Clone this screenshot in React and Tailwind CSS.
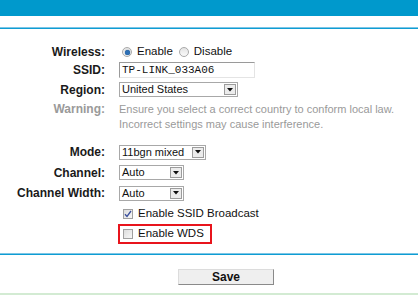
import React from "react";

const Label = ({ children, muted }) => (
  <div
    className={`w-[105px] text-right font-bold text-[12px] ${
      muted ? "text-[#9a9a9a]" : "text-[#1a1a1a]"
    }`}
  >
    {children}
  </div>
);

const Radio = ({ checked }) => (
  <span className="inline-flex w-[10px] h-[10px] rounded-full border border-[#a9a9a9] bg-gradient-to-b from-[#e4e4e4] to-[#fafafa] items-center justify-center">
    {checked && (
      <span className="w-[5px] h-[5px] rounded-full bg-[#2d6fb5] shadow-[0_0_1px_#13406f]" />
    )}
  </span>
);

const Checkbox = ({ checked }) => (
  <span className="inline-flex w-[10px] h-[10px] border border-[#a0a0a0] bg-gradient-to-br from-[#dcdcdc] to-[#f8f8f8] items-center justify-center">
    {checked && (
      <svg width="8" height="8" viewBox="0 0 8 8">
        <path d="M1 4.2 L3 6.5 L7 1" fill="none" stroke="#3a4f9c" strokeWidth="1.3" />
      </svg>
    )}
  </span>
);

const Select = ({ value, width }) => (
  <div
    className="flex items-center h-[15px] border border-[#a8a8a8] bg-white pl-[2px] pr-[1px]"
    style={{ width }}
  >
    <span className="flex-1 text-[11px] text-[#111] leading-none">{value}</span>
    <span className="flex items-center justify-center w-[12px] h-[11px] border border-[#9c9c9c] bg-[#ececec]">
      <svg width="6" height="4" viewBox="0 0 6 4">
        <path d="M0 0 L6 0 L3 3.5 Z" fill="#111" />
      </svg>
    </span>
  </div>
);

const Row = ({ label, muted, h = "h-[20px]", children }) => (
  <div className={`flex items-center ${h}`}>
    <Label muted={muted}>{label}</Label>
    <div className="ml-[14px] flex items-center">{children}</div>
  </div>
);

export default function App() {
  return (
    <div
      className="w-[418px] h-[295px] overflow-hidden bg-white flex flex-col"
      style={{ fontFamily: '"Liberation Sans", Arial, sans-serif' }}
    >
      <div className="h-[16px] bg-[#0099cc]" />
      <div className="h-[11px]" />
      <div className="h-[2px] border-t border-[#7cc6e6] bg-[#0e9dd3]" />

      <div className="pt-[14px] flex flex-col">
        <Row label="Wireless:" h="h-[18px]">
          <span className="ml-[3px] flex items-center">
            <Radio checked />
          </span>
          <span className="ml-[5px] text-[11.5px] text-[#111]">Enable</span>
          <span className="ml-[6px] flex items-center">
            <Radio />
          </span>
          <span className="ml-[5px] text-[11.5px] text-[#111]">Disable</span>
        </Row>
        <Row label="SSID:" h="h-[18px]">
          <div className="w-[136px] h-[16px] border-t border-l border-[#9a9a9a] border-b border-r border-b-[#e4e4e4] border-r-[#e4e4e4] flex items-center pl-[2px]">
            <span
              className="text-[11px] text-[#111] leading-none"
              style={{ fontFamily: '"Liberation Mono", "Courier New", monospace' }}
            >
              TP-LINK_033A06
            </span>
          </div>
        </Row>
        <Row label="Region:" h="h-[21px]">
          <Select value="United States" width={119} />
        </Row>
        <div className="flex pt-[2px] leading-[15px]">
          <Label muted>Warning:</Label>
          <div className="ml-[14px] text-[11px] text-[#9a9a9a]">
            <div>Ensure you select a correct country to conform local law.</div>
            <div>Incorrect settings may cause interference.</div>
          </div>
        </div>

        <div className="mt-[10px]" />
        <Row label="Mode:">
          <Select value="11bgn mixed" width={87} />
        </Row>
        <Row label="Channel:" h="h-[21px]">
          <Select value="Auto" width={65} />
        </Row>
        <Row label="Channel Width:">
          <Select value="Auto" width={65} />
        </Row>
        <Row label="" h="h-[21px]">
          <span className="ml-[4px] flex items-center">
            <Checkbox checked />
          </span>
          <span className="ml-[5px] text-[11.5px] text-[#111]">Enable SSID Broadcast</span>
        </Row>
        <div className="flex h-[20px]">
          <div className="w-[105px]" />
          <div className="ml-[13px] flex items-center border-2 border-[#e8141c] pl-[3px] pr-[6px]">
            <Checkbox />
            <span className="ml-[5px] text-[11.5px] text-[#111]">Enable WDS</span>
          </div>
        </div>
      </div>

      <div className="mt-[9px] h-[2px] border-t border-[#7cc6e6] bg-[#0e9dd3]" />
      <div className="mt-[14px] flex">
        <button className="ml-[178px] w-[96px] h-[16px] bg-[#efefef] border border-[#dcdcdc] border-r-[#8a8a8a] border-b-[#8a8a8a] text-[12px] font-bold text-[#111] leading-none">
          Save
        </button>
      </div>
      <div className="mt-auto h-[2px] bg-[#d3ebd3]" />
    </div>
  );
}
